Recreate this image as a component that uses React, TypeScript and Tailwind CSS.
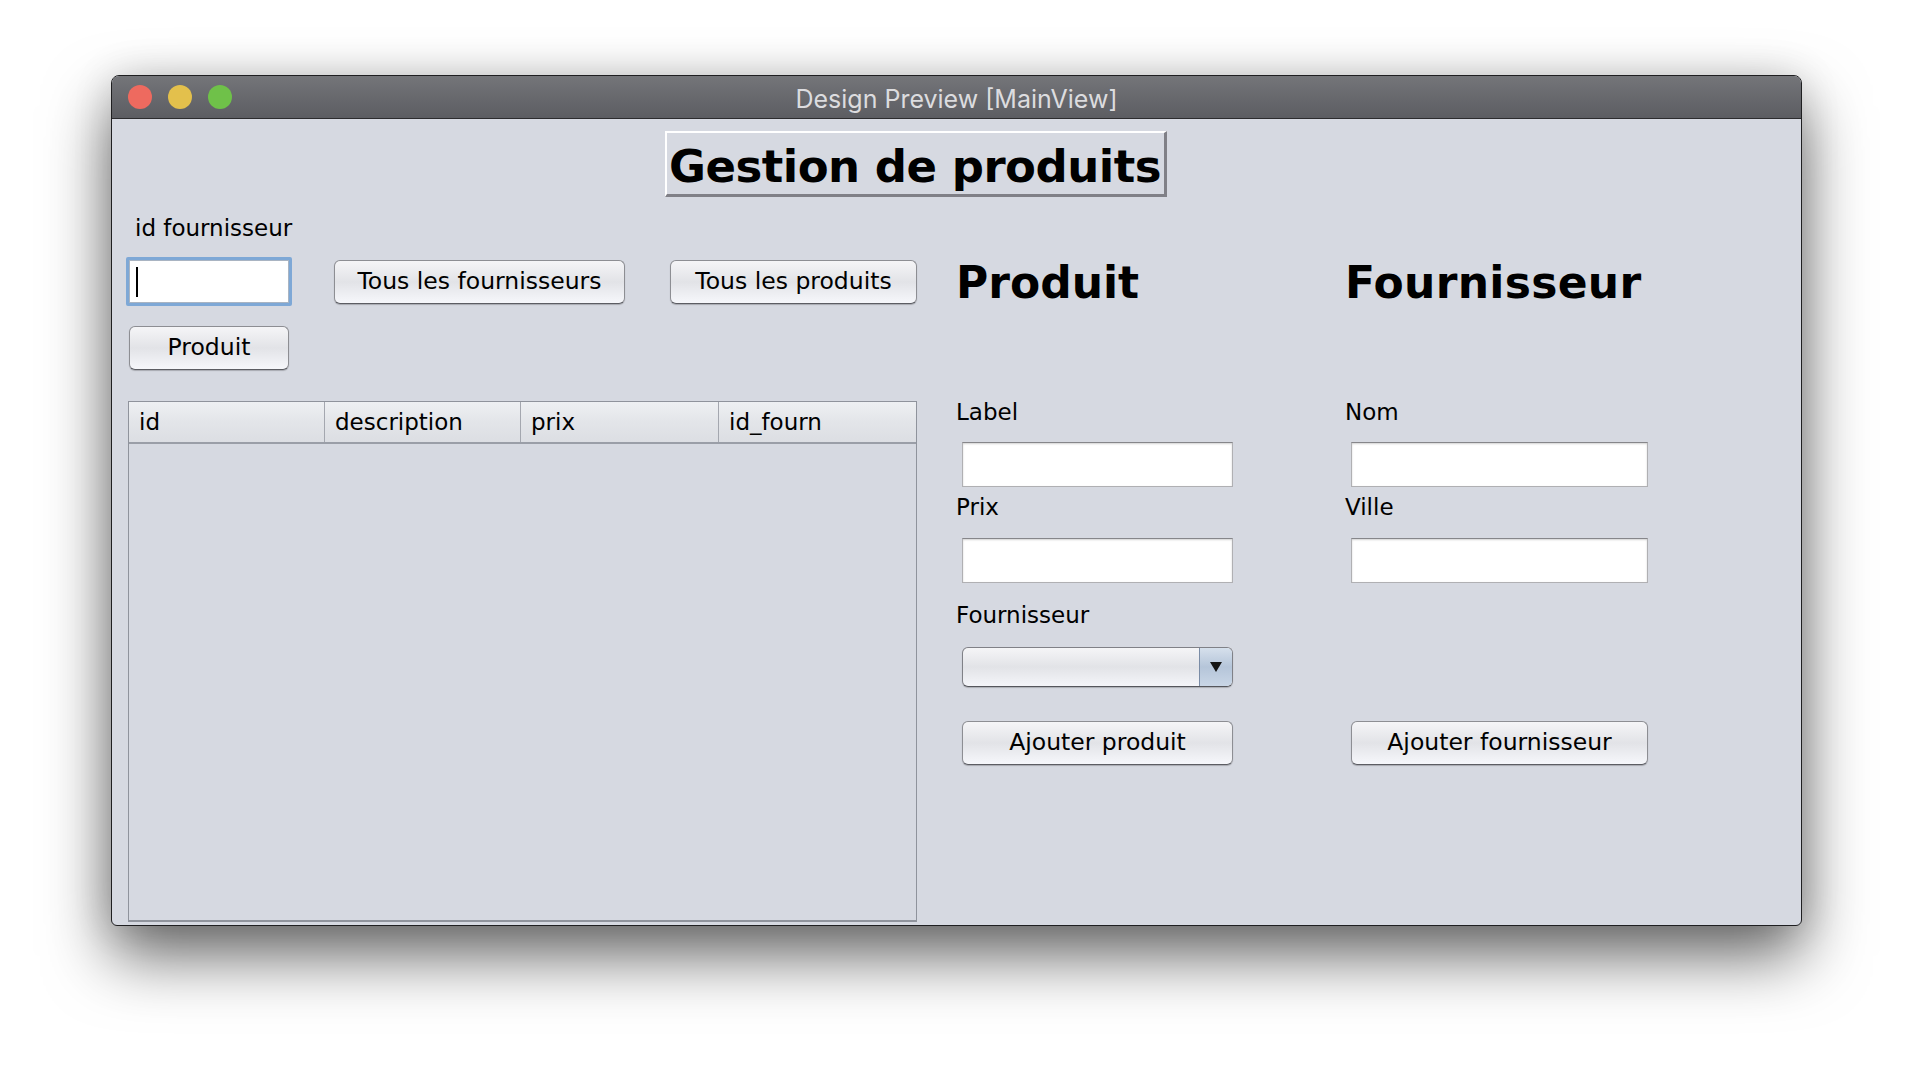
import React from "react";

const ui = 'font-["DejaVu_Sans",sans-serif]';

function Btn({ label, className = "" }: { label: string; className?: string }) {
  return (
    <button
      className={`
        h-[44px]
        rounded-[6px]
        border
        border-[#8d8e93]
        border-b-[#5c5d63]
        bg-gradient-to-b
        from-[#f5f5f7]
        via-[#e2e3e7]
        to-[#f6f7fb]
        text-[23.5px]
        leading-none
        text-black
        shadow-[0_1px_1px_rgba(0,0,0,0.22)]
        ${className}
      `}
    >
      {label}
    </button>
  );
}

function Field({ className = "" }: { className?: string }) {
  return (
    <input
      readOnly
      className={`
        h-[45px]
        border
        border-[#b0b0b3]
        border-t-[#86868a]
        bg-white
        shadow-[inset_0_1px_2px_rgba(0,0,0,0.18)]
        outline-none
        ${className}
      `}
    />
  );
}

function Label({ text }: { text: string }) {
  return <div className="h-[26px] text-[23px] leading-[26px] text-black">{text}</div>;
}

export default function App() {
  return (
    <div className={`h-[1074px] w-full bg-white pl-[111px] pt-[75px] ${ui}`}>
      {/* window */}
      <div
        className="
          flex
          h-[851px]
          w-[1691px]
          flex-col
          overflow-hidden
          rounded-t-[8px]
          rounded-b-[6px]
          border
          border-[#1f1f21]
          bg-[#d6d9e1]
          shadow-[0_30px_65px_rgba(0,0,0,0.6),0_0_40px_rgba(0,0,0,0.12)]
        "
      >
        {/* title bar */}
        <div
          className="
            grid
            h-[43px]
            shrink-0
            grid-cols-[1fr_auto_1fr]
            items-center
            border-b
            border-[#2c2c2e]
            bg-gradient-to-b
            from-[#747579]
            to-[#5c5d62]
          "
        >
          <div className="flex items-center gap-[16px] pl-[16px]">
            <span className="h-[24px] w-[24px] rounded-full bg-[#ee6a5f]" />
            <span className="h-[24px] w-[24px] rounded-full bg-[#e3c04c]" />
            <span className="h-[24px] w-[24px] rounded-full bg-[#6fc149]" />
          </div>
          <div className='pt-[4px] font-["Inter",sans-serif] text-[25px] leading-[30px] text-[#dcdcdf]'>
            Design Preview [MainView]
          </div>
          <div />
        </div>

        {/* content */}
        <div className="flex flex-col pt-[12px]">
          {/* heading box */}
          <div
            className="
              ml-[553px]
              h-[66px]
              w-[502px]
              border-t-2
              border-l-2
              border-r-[3px]
              border-b-[3px]
              border-t-white
              border-l-white
              border-r-[#808087]
              border-b-[#808087]
              pl-[2px]
              pt-[6px]
              text-[45px]
              font-bold
              leading-[55px]
              tracking-[-0.5px]
              text-black
            "
          >
            Gestion de produits
          </div>

          <div className="mt-[18px] flex pl-[14px]">
            {/* left column */}
            <div className="flex w-[791px] flex-col">
              <div className="pl-[9px]">
                <Label text="id fournisseur" />
              </div>

              <div className="mt-[16px] flex items-center">
                <div
                  className="
                    flex
                    h-[49px]
                    w-[166px]
                    items-center
                    rounded-[2px]
                    border-[3px]
                    border-[#7ea8d6]
                    bg-white
                    pl-[7px]
                    shadow-[inset_0_0_0_1px_#a9b4c2]
                  "
                >
                  <span className="h-[30px] w-[2px] bg-black" />
                </div>
                <Btn label="Tous les fournisseurs" className="ml-[42px] w-[291px]" />
                <Btn label="Tous les produits" className="ml-[45px] w-[247px]" />
              </div>

              <Btn label="Produit" className="ml-[3px] mt-[20px] w-[160px]" />

              {/* table */}
              <div className="ml-[2px] mt-[31px] flex h-[521px] w-[789px] flex-col border border-[#8f939c] border-b-2">
                <div
                  className="
                    grid
                    h-[42px]
                    grid-cols-[196px_196px_198px_1fr]
                    border-b-2
                    border-[#9a9ea7]
                    bg-gradient-to-b
                    from-[#eef0f3]
                    via-[#e3e5e9]
                    to-[#dcdee3]
                    text-[23px]
                    text-black
                  "
                >
                  {["id", "description", "prix", "id_fourn"].map((col, i) => (
                    <div
                      key={col}
                      className={`flex items-center px-[10px] ${i < 3 ? "border-r border-[#a4a7af]" : ""}`}
                    >
                      {col}
                    </div>
                  ))}
                </div>
                <div className="flex-1" />
              </div>
            </div>

            {/* right area */}
            <div className="ml-[39px] flex flex-col text-black">
              <div className="mt-[43px] flex">
                <div className="w-[389px] text-[44px] font-bold leading-[50px]">Produit</div>
                <div className="text-[44px] font-bold leading-[50px] tracking-[0.3px]">Fournisseur</div>
              </div>

              <div className="mt-[91px] flex">
                <div className="w-[389px]">
                  <Label text="Label" />
                </div>
                <Label text="Nom" />
              </div>

              <div className="mt-[17px] flex">
                <div className="w-[389px]">
                  <Field className="ml-[6px] w-[271px]" />
                </div>
                <Field className="ml-[6px] w-[297px]" />
              </div>

              <div className="mt-[7px] flex">
                <div className="w-[389px]">
                  <Label text="Prix" />
                </div>
                <Label text="Ville" />
              </div>

              <div className="mt-[18px] flex">
                <div className="w-[389px]">
                  <Field className="ml-[6px] w-[271px]" />
                </div>
                <Field className="ml-[6px] w-[297px]" />
              </div>

              <div className="mt-[19px]">
                <Label text="Fournisseur" />
              </div>

              {/* combo */}
              <div
                className="
                  ml-[6px]
                  mt-[19px]
                  flex
                  h-[40px]
                  w-[271px]
                  overflow-hidden
                  rounded-[6px]
                  border
                  border-[#808187]
                  border-b-[#55565c]
                  bg-gradient-to-b
                  from-[#f5f5f7]
                  via-[#e2e3e7]
                  to-[#f4f5f9]
                  shadow-[0_1px_1px_rgba(0,0,0,0.2)]
                "
              >
                <div className="flex-1" />
                <div
                  className="
                    flex
                    w-[33px]
                    items-center
                    justify-center
                    border-l
                    border-[#7a8ca6]
                    bg-gradient-to-b
                    from-[#d6e0ec]
                    via-[#b5c5d9]
                    to-[#c9d6e6]
                  "
                >
                  <svg width="12" height="10" viewBox="0 0 12 10">
                    <path d="M0 0H12L6 10Z" fill="#141414" />
                  </svg>
                </div>
              </div>

              <div className="mt-[34px] flex">
                <div className="w-[389px]">
                  <Btn label="Ajouter produit" className="ml-[6px] w-[271px]" />
                </div>
                <Btn label="Ajouter fournisseur" className="ml-[6px] w-[297px]" />
              </div>
            </div>
          </div>
        </div>
      </div>
    </div>
  );
}
